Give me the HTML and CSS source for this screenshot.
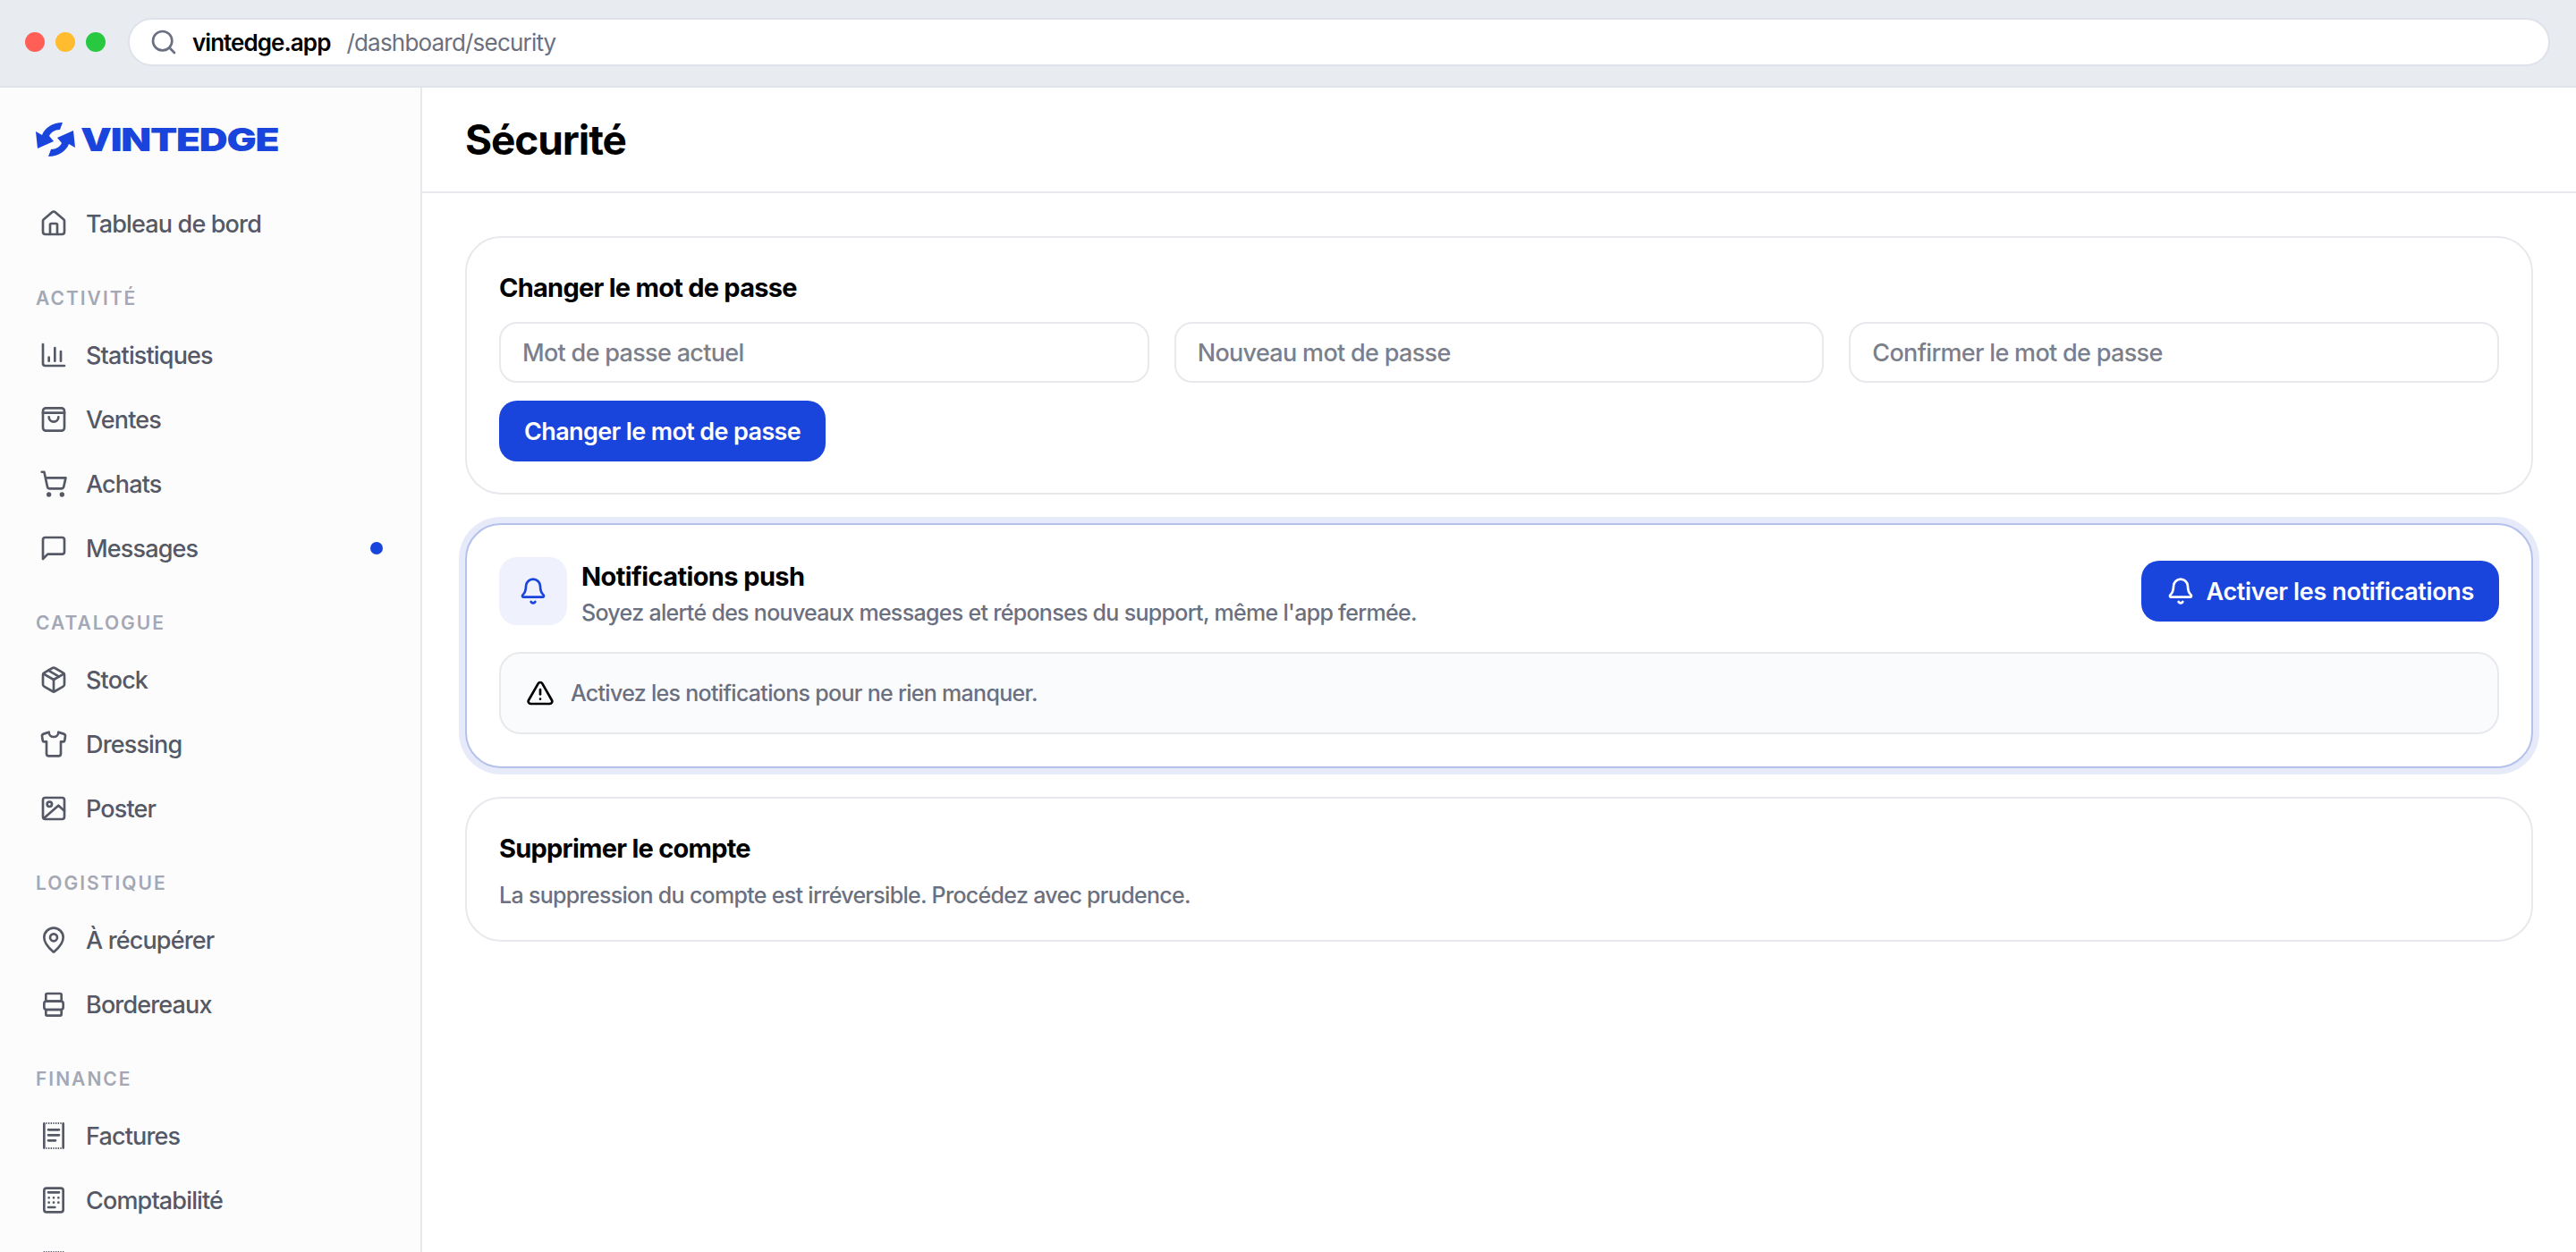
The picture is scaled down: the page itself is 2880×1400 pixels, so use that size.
FILE: index.html
```html
<!DOCTYPE html>
<html lang="fr">

<head>
  <meta charset="utf-8">
  <title>Sécurité - Vintedge</title>
  <link rel="stylesheet" href="styles.css">
</head>

<body>
  <!-- barre du navigateur -->
  <div class="browser-bar">
    <div class="traffic">
      <span class="dot dot-red"></span>
      <span class="dot dot-yellow"></span>
      <span class="dot dot-green"></span>
    </div>
    <div class="address">
      <svg class="address-icon" viewBox="0 0 24 24"><circle cx="11" cy="11" r="8"/><path d="m21 21-4.3-4.3"/></svg>
      <span class="domain">vintedge.app</span>
      <span class="path">/dashboard/security</span>
    </div>
  </div>

  <div class="app">
    <aside class="sidebar">
      <div class="logo">
        <svg class="logo-mark" viewBox="0 0 44 38">
          <path d="M30 0 27 8C21 8 17 11 15 15L20 21 2 29 0 10 7 14C10 6 19 0 30 0Z"/>
          <path d="M14 38 17 30C23 30 27 27 29 23L24 17 42 9 44 28 37 24C34 32 25 38 14 38Z"/>
        </svg>
        <span class="logo-text">VINTEDGE</span>
      </div>

      <a class="nav-item">
        <svg class="nav-icon" viewBox="0 0 24 24"><path d="M15 21v-8a1 1 0 0 0-1-1h-4a1 1 0 0 0-1 1v8"/><path d="M3 10a2 2 0 0 1 .709-1.528l7-5.999a2 2 0 0 1 2.582 0l7 5.999A2 2 0 0 1 21 10v9a2 2 0 0 1-2 2H5a2 2 0 0 1-2-2z"/></svg>
        Tableau de bord
      </a>

      <div class="nav-label">Activité</div>
      <a class="nav-item">
        <svg class="nav-icon" viewBox="0 0 24 24"><path d="M3 3v16a2 2 0 0 0 2 2h16"/><path d="M8 17v-3"/><path d="M13 17V6"/><path d="M18 17V9"/></svg>
        Statistiques
      </a>
      <a class="nav-item">
        <svg class="nav-icon" viewBox="0 0 24 24"><rect x="3" y="2.5" width="18" height="19" rx="2.5"/><path d="M3 6.5h18"/><path d="M16 10a4 4 0 0 1-8 0"/></svg>
        Ventes
      </a>
      <a class="nav-item">
        <svg class="nav-icon" viewBox="0 0 24 24"><circle cx="8" cy="21" r="1"/><circle cx="19" cy="21" r="1"/><path d="M2.05 2.05h2l2.66 12.42a2 2 0 0 0 2 1.58h9.78a2 2 0 0 0 1.95-1.57l1.65-7.43H5.12"/></svg>
        Achats
      </a>
      <a class="nav-item">
        <svg class="nav-icon" viewBox="0 0 24 24"><path d="M21 15a2 2 0 0 1-2 2H7l-4 4V5a2 2 0 0 1 2-2h14a2 2 0 0 1 2 2z"/></svg>
        Messages
        <span class="nav-badge"></span>
      </a>

      <div class="nav-label">Catalogue</div>
      <a class="nav-item">
        <svg class="nav-icon" viewBox="0 0 24 24"><path d="M21 8a2 2 0 0 0-1-1.73l-7-4a2 2 0 0 0-2 0l-7 4A2 2 0 0 0 3 8v8a2 2 0 0 0 1 1.73l7 4a2 2 0 0 0 2 0l7-4A2 2 0 0 0 21 16Z"/><path d="m3.3 7 8.7 5 8.7-5"/><path d="M12 22V12"/><path d="m7.5 4.27 9 5.15"/></svg>
        Stock
      </a>
      <a class="nav-item">
        <svg class="nav-icon" viewBox="0 0 24 24"><path d="M20.38 3.46 16 2a4 4 0 0 1-8 0L3.62 3.46a2 2 0 0 0-1.34 2.23l.58 3.47a1 1 0 0 0 .99.84H6v10c0 1.1.9 2 2 2h8a2 2 0 0 0 2-2V10h2.15a1 1 0 0 0 .99-.84l.58-3.47a2 2 0 0 0-1.34-2.23z"/></svg>
        Dressing
      </a>
      <a class="nav-item">
        <svg class="nav-icon" viewBox="0 0 24 24"><rect x="3" y="3" width="18" height="18" rx="2"/><circle cx="8.5" cy="8.5" r="2"/><path d="M4 20 16 9.5l5 4.5"/></svg>
        Poster
      </a>

      <div class="nav-label">Logistique</div>
      <a class="nav-item">
        <svg class="nav-icon" viewBox="0 0 24 24"><path d="M20 10c0 4.993-5.539 10.193-7.399 11.799a1 1 0 0 1-1.202 0C9.539 20.193 4 14.993 4 10a8 8 0 0 1 16 0"/><circle cx="12" cy="10" r="3"/></svg>
        À récupérer
      </a>
      <a class="nav-item">
        <svg class="nav-icon" viewBox="0 0 24 24"><rect x="5.5" y="3" width="13" height="6.5" rx="1"/><rect x="4" y="9.5" width="16" height="7" rx="2"/><rect x="5.5" y="16.5" width="13" height="5" rx="1"/></svg>
        Bordereaux
      </a>

      <div class="nav-label">Finance</div>
      <a class="nav-item">
        <svg class="nav-icon" viewBox="0 0 24 24"><path d="M4 2v20M20 2v20"/><path class="dash" d="M3.5 1.5h17M3.5 22.5h17"/><path d="M7.5 7h9M7.5 11.5h9M7.5 16h6"/></svg>
        Factures
      </a>
      <a class="nav-item">
        <svg class="nav-icon" viewBox="0 0 24 24"><rect x="4" y="2" width="16" height="20" rx="2"/><path d="M7.5 5.5h9M7.5 18h5.5"/><path d="M8 10h.01M12 10h.01M16 10h.01M8 14h.01M12 14h.01M16 14h.01"/></svg>
        Comptabilité
      </a>
      <a class="nav-item">
        <svg class="nav-icon" viewBox="0 0 24 24"><path class="dash" d="M3.5 1.5h17"/></svg>
      </a>
    </aside>

    <main class="main">
      <header class="page-header">
        <h1>Sécurité</h1>
      </header>

      <div class="content">
        <section class="card card-password">
          <h3 class="card-title">Changer le mot de passe</h3>
          <div class="field-row">
            <input class="field" placeholder="Mot de passe actuel">
            <input class="field" placeholder="Nouveau mot de passe">
            <input class="field" placeholder="Confirmer le mot de passe">
          </div>
          <button class="primary-btn">Changer le mot de passe</button>
        </section>

        <section class="card card-focus">
          <div class="push-row">
            <div class="push-icon">
              <svg class="bell" viewBox="0 0 24 24"><path d="M10.268 21a2 2 0 0 0 3.464 0"/><path d="M3.262 15.326A1 1 0 0 0 4 17h16a1 1 0 0 0 .74-1.673C19.41 13.956 18 12.499 18 8A6 6 0 0 0 6 8c0 4.499-1.411 5.956-2.738 7.326"/></svg>
            </div>
            <div class="push-text">
              <h3 class="push-title">Notifications push</h3>
              <p class="muted">Soyez alerté des nouveaux messages et réponses du support, même l'app fermée.</p>
            </div>
            <button class="primary-btn with-icon">
              <svg class="bell bell-white" viewBox="0 0 24 24"><path d="M10.268 21a2 2 0 0 0 3.464 0"/><path d="M3.262 15.326A1 1 0 0 0 4 17h16a1 1 0 0 0 .74-1.673C19.41 13.956 18 12.499 18 8A6 6 0 0 0 6 8c0 4.499-1.411 5.956-2.738 7.326"/></svg>
              Activer les notifications
            </button>
          </div>
          <div class="notice">
            <svg class="notice-icon" viewBox="0 0 24 24"><path d="m21.73 18-8-14a2 2 0 0 0-3.48 0l-8 14A2 2 0 0 0 4 21h16a2 2 0 0 0 1.73-3"/><path d="M12 9v4"/><path d="M12 17h.01"/></svg>
            <p class="muted">Activez les notifications pour ne rien manquer.</p>
          </div>
        </section>

        <section class="card card-danger">
          <h3 class="card-title">Supprimer le compte</h3>
          <p class="muted">La suppression du compte est irréversible. Procédez avec prudence.</p>
        </section>
      </div>
    </main>
  </div>
</body>

</html>
```

FILE: styles.css
```css
* {
  box-sizing: border-box;
}

html,
body {
  height: 100%;
}

body {
  margin: 0;
  height: 1400px;
  overflow: hidden;
  display: flex;
  flex-direction: column;
  font-family: Inter, 'Noto Sans', sans-serif;
  color: #000;
  background-color: #fff;
}

h1,
h3,
p {
  margin: 0;
}

svg {
  fill: none;
  stroke: currentColor;
  stroke-width: 2;
  stroke-linecap: round;
  stroke-linejoin: round;
  flex-shrink: 0;
}

/* barre du navigateur */
.browser-bar {
  height: 98px;
  flex-shrink: 0;
  display: flex;
  align-items: center;
  padding: 0 29px 2px 28px;
  background-color: #e8ebf0;
  border-bottom: 2px solid #e0e3ea;
}

.traffic {
  display: flex;
  gap: 12px;
  margin-right: 25px;
}

.dot {
  width: 22px;
  height: 22px;
  border-radius: 50%;
}

.dot-red {
  background-color: #ff5f57;
}

.dot-yellow {
  background-color: #febc2e;
}

.dot-green {
  background-color: #28c840;
}

.address {
  flex: 1;
  height: 54px;
  display: flex;
  align-items: center;
  padding: 0 0 0 22px;
  background-color: #fff;
  border: 2px solid #dfe2ea;
  border-radius: 27px;
  font-size: 26px;
}

.address-icon {
  width: 32px;
  height: 32px;
  color: #6b7080;
  margin-right: 16px;
}

.domain {
  font-weight: 600;
  letter-spacing: -0.95px;
  margin-right: 18px;
}

.path {
  color: #6b7080;
  letter-spacing: -0.8px;
}

.app {
  flex: 1;
  min-height: 0;
  display: flex;
}

/* menu lateral */
.sidebar {
  width: 472px;
  flex-shrink: 0;
  height: 1302px;
  overflow: hidden;
  background-color: #fcfcfd;
  border-right: 2px solid #e8e9ed;
}

.logo {
  height: 116px;
  display: flex;
  align-items: center;
  padding-left: 40px;
}

.logo-mark {
  width: 44px;
  height: 38px;
  fill: #1a45dc;
  stroke: none;
}

.logo-text {
  margin-left: 6px;
  font-size: 35px;
  font-weight: 900;
  line-height: 1;
  letter-spacing: -1px;
  color: #1a45dc;
  transform: scaleX(1.26);
  transform-origin: left center;
}

.nav-item {
  height: 72px;
  display: flex;
  align-items: center;
  gap: 20px;
  padding: 0 44px;
  font-size: 27px;
  font-weight: 500;
  letter-spacing: -0.85px;
  color: #555966;
}

.nav-icon {
  width: 32px;
  height: 32px;
}

.dash {
  stroke-dasharray: 1 1;
  stroke-width: 1.5;
  stroke-linecap: butt;
}

.nav-badge {
  width: 14px;
  height: 14px;
  margin-left: auto;
  margin-right: -2px;
  border-radius: 50%;
  background-color: #1a45dc;
}

.nav-label {
  height: 32px;
  margin: 31px 0 12px;
  padding-left: 40px;
  display: flex;
  align-items: center;
  font-size: 21px;
  font-weight: 600;
  letter-spacing: 2px;
  text-transform: uppercase;
  color: #a4a8b4;
}

/* contenu */
.main {
  flex: 1;
  min-width: 0;
}

.page-header {
  height: 118px;
  display: flex;
  align-items: center;
  padding-left: 48px;
  border-bottom: 2px solid #e8e9ed;
}

.page-header h1 {
  font-size: 46px;
  font-weight: 700;
  letter-spacing: -1.1px;
}

.content {
  display: flex;
  flex-direction: column;
  gap: 32px;
  padding: 48px 48px 0;
}

.card {
  padding: 36px;
  background-color: #fff;
  border: 2px solid #e8e9ed;
  border-radius: 40px;
}

.card-password {
  padding-bottom: 35px;
}

.card-focus {
  border-color: #b4c1eb;
  box-shadow: 0 0 0 7px #e6eaf9;
}

.card-danger {
  padding-bottom: 32px;
}

.card-danger .card-title {
  margin-bottom: 14px;
}

.card-title {
  font-size: 29px;
  font-weight: 700;
  line-height: 40px;
  letter-spacing: -0.75px;
  margin-bottom: 18px;
}

.field-row {
  display: grid;
  grid-template-columns: repeat(3, 1fr);
  gap: 28px;
  margin-bottom: 20px;
}

.field {
  height: 68px;
  min-width: 0;
  padding: 0 24px;
  font-family: inherit;
  font-size: 27px;
  font-weight: 500;
  letter-spacing: -0.68px;
  border: 2px solid #e8e9ed;
  border-radius: 20px;
  background-color: #fff;
}

.field::placeholder {
  color: #7b7f8b;
  opacity: 1;
}

.primary-btn {
  height: 68px;
  padding: 0 28px;
  border: none;
  border-radius: 20px;
  font-family: inherit;
  font-size: 27px;
  font-weight: 600;
  letter-spacing: -0.63px;
  color: #fff;
  background-color: #1a45dc;
}

.with-icon {
  display: flex;
  align-items: center;
  gap: 13px;
  letter-spacing: -0.35px;
}

.muted {
  font-size: 25px;
  font-weight: 500;
  line-height: 36px;
  letter-spacing: -0.7px;
  color: #6b7080;
}

.push-row {
  height: 76px;
  display: flex;
  align-items: center;
  gap: 16px;
}

.push-icon {
  width: 76px;
  height: 76px;
  display: flex;
  align-items: center;
  justify-content: center;
  border-radius: 20px;
  background-color: #eff2fd;
}

.bell {
  width: 32px;
  height: 32px;
  color: #1a45dc;
}

.bell-white {
  color: #fff;
}

.push-text {
  flex: 1;
  align-self: flex-start;
  padding-top: 2px;
}

.push-title {
  font-size: 29px;
  font-weight: 700;
  line-height: 40px;
  letter-spacing: -0.6px;
  margin-bottom: 2px;
}

.notice {
  height: 92px;
  margin-top: 30px;
  display: flex;
  align-items: center;
  gap: 18px;
  padding: 0 28px;
  background-color: #fafbfd;
  border: 2px solid #e8e9ed;
  border-radius: 24px;
}

.notice-icon {
  width: 32px;
  height: 32px;
  color: #000;
}
```
